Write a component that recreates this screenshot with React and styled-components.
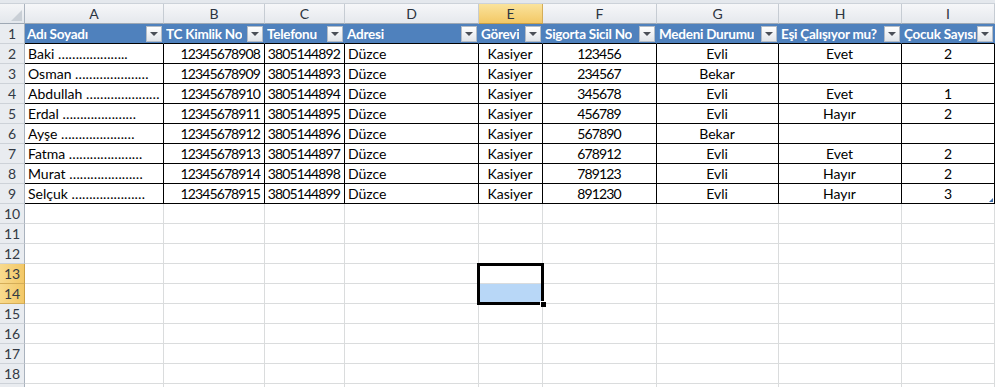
import React from 'react';
import styled, { createGlobalStyle, css } from 'styled-components';

const GlobalStyle = createGlobalStyle`
  html, body {
    margin: 0;
    padding: 0;
    background: #fff;
    overflow: hidden;
  }
  body {
    font-family: Lato, 'Liberation Sans', sans-serif;
  }
`;

const TEMPLATE = '25px 139px 101px 80px 134px 64px 114px 122px 123px 1fr';
const LETTERS = ['A', 'B', 'C', 'D', 'E', 'F', 'G', 'H', 'I'];
const HEADINGS = [
  'Adı Soyadı',
  'TC Kimlik No',
  'Telefonu',
  'Adresi',
  'Görevi',
  'Sigorta Sicil No',
  'Medeni Durumu',
  'Eşi Çalışıyor mu?',
  'Çocuk Sayısı',
];
const ALIGN = ['left', 'right', 'right', 'left', 'center', 'center', 'center', 'center', 'center'];
const NUMERIC = [false, true, true, false, false, true, false, false, true];

const DOTS = '…………………';
const PEOPLE = [
  ['Baki ………………..', '12345678908', '3805144892', 'Düzce', 'Kasiyer', '123456', 'Evli', 'Evet', '2'],
  [`Osman ${DOTS}`, '12345678909', '3805144893', 'Düzce', 'Kasiyer', '234567', 'Bekar', '', ''],
  [`Abdullah ${DOTS}`, '12345678910', '3805144894', 'Düzce', 'Kasiyer', '345678', 'Evli', 'Evet', '1'],
  [`Erdal ${DOTS}`, '12345678911', '3805144895', 'Düzce', 'Kasiyer', '456789', 'Evli', 'Hayır', '2'],
  [`Ayşe ${DOTS}`, '12345678912', '3805144896', 'Düzce', 'Kasiyer', '567890', 'Bekar', '', ''],
  [`Fatma ${DOTS}`, '12345678913', '3805144897', 'Düzce', 'Kasiyer', '678912', 'Evli', 'Evet', '2'],
  [`Murat ${DOTS}`, '12345678914', '3805144898', 'Düzce', 'Kasiyer', '789123', 'Evli', 'Hayır', '2'],
  [`Selçuk ${DOTS}`, '12345678915', '3805144899', 'Düzce', 'Kasiyer', '891230', 'Evli', 'Hayır', '3'],
];

const Sheet = styled.div`
  height: 387px;
  overflow: hidden;
  display: flex;
  flex-direction: column;
  font-size: 14px;
`;

const TopStrip = styled.div`
  height: 3px;
  flex: none;
  background: #e4e8ed;
  border-bottom: 1px solid #ccd2d9;
`;

const Row = styled.div`
  display: grid;
  grid-template-columns: ${TEMPLATE};
  height: 20px;
  flex: none;
`;

const Corner = styled.div`
  box-sizing: border-box;
  background: linear-gradient(#f4f5f7, #e3e7ec);
  border-right: 1px solid #aab3be;
  border-bottom: 1px solid #9ea8b4;
  display: flex;
  align-items: flex-end;
  justify-content: flex-end;
  padding: 0 2px 2px 0;

  &::after {
    content: '';
    width: 0;
    height: 0;
    border-left: 11px solid transparent;
    border-bottom: 11px solid #c9cfd6;
  }
`;

const ColHead = styled.div`
  box-sizing: border-box;
  background: ${({ $active }) =>
    $active ? 'linear-gradient(#fae39c, #f3c866)' : 'linear-gradient(#f6f7f9, #e5e8ed)'};
  border-right: 1px solid ${({ $active }) => ($active ? '#d4ad58' : '#c6ccd3')};
  border-bottom: 1px solid ${({ $active }) => ($active ? '#c99f45' : '#9ea8b4')};
  color: #2c3440;
  display: flex;
  align-items: center;
  justify-content: center;
  line-height: 1;
`;

const RowHead = styled.div`
  box-sizing: border-box;
  background: ${({ $active }) => ($active ? 'linear-gradient(90deg, #f8da8e, #f3c867)' : '#e9ecf0')};
  border-right: 1px solid ${({ $active }) => ($active ? '#c99f45' : '#a9b2bd')};
  border-bottom: 1px solid ${({ $active }) => ($active ? '#d4ad58' : '#cdd2d8')};
  color: #333a44;
  display: flex;
  align-items: center;
  justify-content: center;
  line-height: 1;
`;

const TitleCell = styled.div`
  box-sizing: border-box;
  background: #4f81bd;
  border-right: 1px solid #4f81bd;
  border-bottom: 1px solid #000;
  color: #fff;
  font-weight: 700;
  font-size: 13.5px;
  letter-spacing: -0.25px;
  display: flex;
  align-items: center;
  justify-content: space-between;
  padding-left: 2px;
  min-width: 0;
  overflow: hidden;
`;

const TitleText = styled.span`
  white-space: nowrap;
  overflow: hidden;
  min-width: 0;
`;

const FilterButton = styled.span`
  flex: none;
  box-sizing: border-box;
  width: 16px;
  height: 16px;
  margin-right: 1px;
  background: linear-gradient(#ffffff, #e1e5ea);
  border: 1px solid #b4bcc6;
  display: flex;
  align-items: center;
  justify-content: center;

  &::after {
    content: '';
    width: 0;
    height: 0;
    margin-top: 1px;
    border-left: 4px solid transparent;
    border-right: 4px solid transparent;
    border-top: 4px solid #4a4f57;
  }
`;

const Cell = styled.div`
  position: relative;
  box-sizing: border-box;
  display: flex;
  align-items: center;
  white-space: nowrap;
  min-width: 0;
  color: #000;
  padding: 0 4px 0 3px;
  letter-spacing: ${({ $numeric }) => ($numeric ? '-0.9px' : 'normal')};
  background: ${({ $fill }) => $fill || 'transparent'};
  justify-content: ${({ $align }) =>
    $align === 'right' ? 'flex-end' : $align === 'center' ? 'center' : 'flex-start'};
  ${({ $boxed }) =>
    $boxed
      ? css`
          border-right: 1px solid #000;
          border-bottom: 1px solid #000;
        `
      : css`
          border-right: 1px solid #dadcdd;
          border-bottom: 1px solid #dadcdd;
        `}
  ${({ $handle }) =>
    $handle &&
    css`
      &::after {
        content: '';
        position: absolute;
        right: 1px;
        bottom: 1px;
        width: 0;
        height: 0;
        border-left: 4px solid transparent;
        border-bottom: 4px solid #3d6aa4;
      }
    `}
`;

const Selection = styled.div`
  position: absolute;
  top: -1px;
  left: -2px;
  width: 67px;
  height: 42px;
  box-sizing: border-box;
  border: 3px solid #000;
  z-index: 2;
  pointer-events: none;
`;

const FillHandle = styled.span`
  position: absolute;
  right: -5px;
  bottom: -5px;
  width: 5px;
  height: 5px;
  background: #000;
  border: 1px solid #fff;
  border-right: none;
  border-bottom: none;
`;

const SELECTED_ROWS = [13, 14];

// last row is only a sliver at the bottom edge, so it gets no number
const EmptyRow = ({ n, sliver }) => {
  const active = SELECTED_ROWS.includes(n);
  return (
    <Row>
      <RowHead $active={active}>{sliver ? null : n}</RowHead>
      {LETTERS.map((l) => (
        <Cell key={l} $fill={n === 14 && l === 'E' ? '#b8d7f7' : undefined}>
          {n === 13 && l === 'E' && (
            <Selection>
              <FillHandle />
            </Selection>
          )}
        </Cell>
      ))}
    </Row>
  );
};

const App = () => (
  <>
    <GlobalStyle />
    <Sheet>
      <TopStrip />
      <Row>
        <Corner />
        {LETTERS.map((l) => (
          <ColHead key={l} $active={l === 'E'}>
            {l}
          </ColHead>
        ))}
      </Row>
      <Row>
        <RowHead>1</RowHead>
        {HEADINGS.map((h) => (
          <TitleCell key={h}>
            <TitleText>{h}</TitleText>
            <FilterButton />
          </TitleCell>
        ))}
      </Row>
      {PEOPLE.map((person, i) => (
        <Row key={person[1]}>
          <RowHead>{i + 2}</RowHead>
          {person.map((value, j) => (
            <Cell
              key={LETTERS[j]}
              $boxed
              $align={ALIGN[j]}
              $numeric={NUMERIC[j]}
              $handle={i === PEOPLE.length - 1 && j === person.length - 1}
            >
              {value}
            </Cell>
          ))}
        </Row>
      ))}
      {Array.from({ length: 10 }, (_, k) => (
        <EmptyRow key={k} n={k + 10} sliver={k === 9} />
      ))}
    </Sheet>
  </>
);

export default App;
